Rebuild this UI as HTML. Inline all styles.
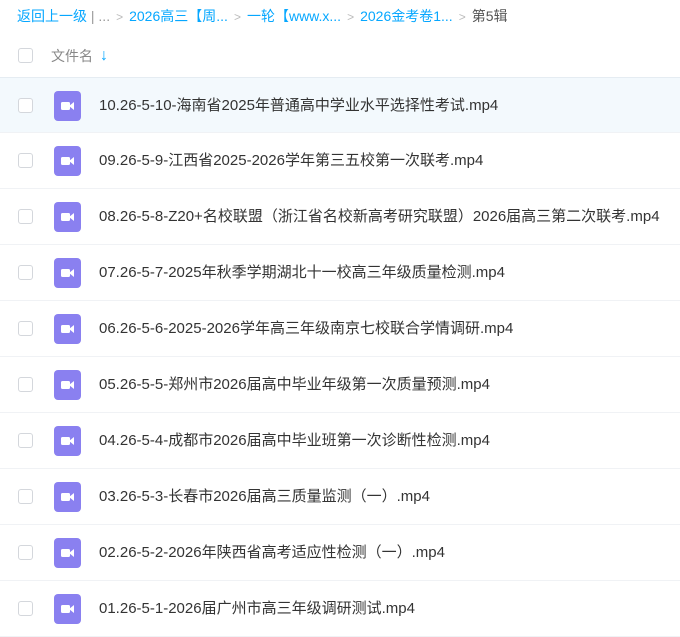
<!DOCTYPE html>
<html><head><meta charset="utf-8"><style>
*{margin:0;padding:0;box-sizing:border-box}
body{width:680px;height:628px;overflow:hidden;background:#fff;font-family:"Liberation Sans","Noto Sans CJK SC",sans-serif;font-size:14px;color:#333}
.bc{position:absolute;top:7px;left:17px;white-space:nowrap;color:#06a7ff;font-size:14px;line-height:18px}
.bc .g{color:#bbb;margin:0 6px;font-size:12px}
.bc .d{color:#999}
.bc .c{color:#555}
.hd{position:absolute;top:44px;left:0;width:680px;height:24px}
.cb{position:absolute;left:18px;width:15px;height:15px;border:1px solid #d4d7dc;border-radius:3px;background:#fff}
.hd .t{position:absolute;left:51px;top:2px;color:#888;font-size:14px}
.hd .ar{position:absolute;left:100px;top:3px;color:#06a7ff;font-weight:bold;font-size:16px}
.row{position:absolute;left:0;width:680px;height:56px;border-bottom:1px solid #f0f2f5}
.row.h{background:#f3f9fd;border-top:1px solid #e5ecf2}
.row .cb{top:20px}
.ic{position:absolute;left:54px;top:13px;width:27px;height:30px;background:#8a80f0;border-radius:4px}
.ic i{position:absolute;left:7px;top:11px;width:9px;height:8px;background:#fff;border-radius:1.5px}
.ic b{position:absolute;left:15px;top:11px;width:0;height:0;border-top:4px solid transparent;border-bottom:4px solid transparent;border-right:5px solid #fff}
.row .n{position:absolute;left:99px;top:18px;white-space:nowrap;line-height:19px;font-size:15px}
</style></head><body>
<div class="bc">返回上一级<span class="d"> | ...</span><span class="g">&gt;</span>2026高三【周...<span class="g">&gt;</span>一轮【www.x...<span class="g">&gt;</span>2026金考卷1...<span class="g">&gt;</span><span class="c">第5辑</span></div>
<div class="hd"><div class="cb" style="top:4px"></div><span class="t">文件名</span><span class="ar">↓</span></div>
<div class="row h" style="top:77px"><div class="cb"></div><div class="ic"><i></i><b></b></div><span class="n">10.26-5-10-海南省2025年普通高中学业水平选择性考试.mp4</span></div>
<div class="row" style="top:133px"><div class="cb"></div><div class="ic"><i></i><b></b></div><span class="n">09.26-5-9-江西省2025-2026学年第三五校第一次联考.mp4</span></div>
<div class="row" style="top:189px"><div class="cb"></div><div class="ic"><i></i><b></b></div><span class="n">08.26-5-8-Z20+名校联盟（浙江省名校新高考研究联盟）2026届高三第二次联考.mp4</span></div>
<div class="row" style="top:245px"><div class="cb"></div><div class="ic"><i></i><b></b></div><span class="n">07.26-5-7-2025年秋季学期湖北十一校高三年级质量检测.mp4</span></div>
<div class="row" style="top:301px"><div class="cb"></div><div class="ic"><i></i><b></b></div><span class="n">06.26-5-6-2025-2026学年高三年级南京七校联合学情调研.mp4</span></div>
<div class="row" style="top:357px"><div class="cb"></div><div class="ic"><i></i><b></b></div><span class="n">05.26-5-5-郑州市2026届高中毕业年级第一次质量预测.mp4</span></div>
<div class="row" style="top:413px"><div class="cb"></div><div class="ic"><i></i><b></b></div><span class="n">04.26-5-4-成都市2026届高中毕业班第一次诊断性检测.mp4</span></div>
<div class="row" style="top:469px"><div class="cb"></div><div class="ic"><i></i><b></b></div><span class="n">03.26-5-3-长春市2026届高三质量监测（一）.mp4</span></div>
<div class="row" style="top:525px"><div class="cb"></div><div class="ic"><i></i><b></b></div><span class="n">02.26-5-2-2026年陕西省高考适应性检测（一）.mp4</span></div>
<div class="row" style="top:581px"><div class="cb"></div><div class="ic"><i></i><b></b></div><span class="n">01.26-5-1-2026届广州市高三年级调研测试.mp4</span></div>
</body></html>
